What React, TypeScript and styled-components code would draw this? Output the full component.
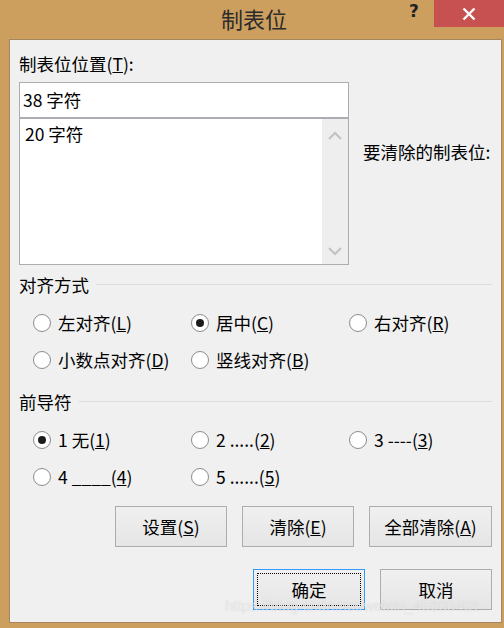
import React, { useState } from 'react'
import styled, { createGlobalStyle } from 'styled-components'

const GlobalStyle = createGlobalStyle`
  html, body {
    margin: 0;
    padding: 0;
  }
  body {
    font-family: "Noto Sans CJK SC", "Noto Sans", sans-serif;
    color: #000;
  }
`

const Window = styled.div`
  position: relative;
  width: 504px;
  height: 628px;
  background: #cc9f5f;
  display: flex;
  flex-direction: column;
  overflow: hidden;
`

const TitleBar = styled.div`
  height: 39px;
  display: flex;
  align-items: flex-start;
`

const Title = styled.div`
  flex: 1;
  text-align: center;
  font-size: 22px;
  line-height: 37px;
  color: #2b2b2b;
  padding-left: 104px;
`

const HelpBtn = styled.div`
  width: 20px;
  margin-right: 10px;
  font-family: "DejaVu Sans", sans-serif;
  font-weight: bold;
  font-size: 17px;
  line-height: 22px;
  color: #222;
  text-align: center;
`

const CloseBtn = styled.div`
  width: 70px;
  height: 27px;
  background: #c75050;
  display: flex;
  align-items: center;
  justify-content: center;
`

const Panel = styled.div`
  margin: 0 2px 5px 9px;
  flex: 1;
  background: #f0f0f0;
  border: 1px solid #a3865f;
  padding: 13px 9px 0 9px;
  font-size: 17.5px;
  display: flex;
  flex-direction: column;
`

const TopRow = styled.div`
  display: flex;
`

const LeftCol = styled.div`
  width: 330px;
  display: flex;
  flex-direction: column;
`

const Label = styled.div`
  line-height: 22px;
  height: 22px;
`

const Input = styled.div`
  margin-top: 7px;
  height: 34px;
  border: 1px solid #abadb3;
  background: #fff;
  padding-left: 3px;
  line-height: 34px;
`

const ListBox = styled.div`
  height: 145px;
  border: 1px solid #abadb3;
  background: #fff;
  display: flex;
`

const ListItems = styled.div`
  flex: 1;
  padding: 2px 0 0 5px;
  line-height: 26px;
`

const ScrollBar = styled.div`
  width: 26px;
  background: #eeeeee;
  display: flex;
  flex-direction: column;
  justify-content: space-between;
  align-items: center;
  padding: 12px 0 8px;
`

const RightLabel = styled.div`
  margin-left: 14px;
  padding-top: 88px;
  line-height: 22px;
  white-space: nowrap;
`

const GroupHeader = styled.div<{ $top: number }>`
  margin-top: ${p => p.$top}px;
  display: flex;
  align-items: center;
  height: 22px;
  line-height: 22px;

  &::after {
    content: '';
    flex: 1;
    height: 1px;
    background: #dcdcdc;
    margin-left: 7px;
    margin-top: -1px;
  }
`

const RadioGrid = styled.div`
  margin-top: 8px;
  padding-left: 14px;
  display: grid;
  grid-template-columns: 158px 158px 158px;
  grid-auto-rows: 37px;
`

const RadioItem = styled.label`
  display: flex;
  align-items: center;
  white-space: pre;
  cursor: default;
`

const Circle = styled.span<{ $on: boolean }>`
  width: 18px;
  height: 18px;
  border-radius: 50%;
  border: 1px solid #8c8c8c;
  background: #fff;
  box-sizing: border-box;
  margin-right: 7px;
  display: flex;
  align-items: center;
  justify-content: center;

  &::after {
    content: '';
    width: 8px;
    height: 8px;
    border-radius: 50%;
    background: #1c1c1c;
    display: ${p => (p.$on ? 'block' : 'none')};
  }
`

const ButtonRow = styled.div<{ $top: number }>`
  margin-top: ${p => p.$top}px;
  display: flex;
  justify-content: flex-end;
  gap: 15px;
`

const Button = styled.div<{ $w?: number; $focus?: boolean }>`
  width: ${p => p.$w || 112}px;
  height: 41px;
  box-sizing: border-box;
  border: 1px solid ${p => (p.$focus ? '#3399ff' : '#adadad')};
  background: linear-gradient(#f0f0f0, #e5e5e5);
  display: flex;
  align-items: center;
  justify-content: center;
  padding: 3px;

  span {
    flex: 1;
    align-self: stretch;
    display: flex;
    align-items: center;
    justify-content: center;
    border: 1px dotted ${p => (p.$focus ? '#000' : 'transparent')};
  }
`

const Watermark = styled.div`
  position: absolute;
  left: 225px;
  top: 597px;
  font-family: "Liberation Sans", sans-serif;
  font-size: 15px;
  color: rgba(255, 255, 255, 0.6);
  text-shadow: 0 0 1px rgba(140, 140, 140, 0.4);
  pointer-events: none;
  white-space: nowrap;
`

const Chevron = ({ up }: { up?: boolean }) => (
  <svg width="14" height="9" viewBox="0 0 14 9">
    <path
      d={up ? 'M1 8 L7 2 L13 8' : 'M1 1 L7 7 L13 1'}
      fill="none"
      stroke="#c2c2c2"
      strokeWidth="2"
    />
  </svg>
)

const align = [
  { id: 'l', text: '左对齐', key: 'L' },
  { id: 'c', text: '居中', key: 'C' },
  { id: 'r', text: '右对齐', key: 'R' },
  { id: 'd', text: '小数点对齐', key: 'D' },
  { id: 'b', text: '竖线对齐', key: 'B' }
]

const leaders = [
  { id: '1', text: '1 无' },
  { id: '2', text: '2 .....' },
  { id: '3', text: '3 ----' },
  { id: '4', text: '4 ____' },
  { id: '5', text: '5 ......' }
]

export default () => {
  const [alignment, setAlignment] = useState('c')
  const [leader, setLeader] = useState('1')

  return (
    <Window>
      <GlobalStyle />
      <TitleBar>
        <Title>制表位</Title>
        <HelpBtn>?</HelpBtn>
        <CloseBtn>
          <svg width="14" height="14" viewBox="0 0 14 14">
            <path d="M1.5 1.5 L12.5 12.5 M12.5 1.5 L1.5 12.5" stroke="#fff" strokeWidth="2.4" />
          </svg>
        </CloseBtn>
      </TitleBar>
      <Panel>
        <TopRow>
          <LeftCol>
            <Label>制表位位置(<u>T</u>):</Label>
            <Input>38 字符</Input>
            <ListBox>
              <ListItems>20 字符</ListItems>
              <ScrollBar>
                <Chevron up />
                <Chevron />
              </ScrollBar>
            </ListBox>
          </LeftCol>
          <RightLabel>要清除的制表位:</RightLabel>
        </TopRow>

        <GroupHeader $top={9}>对齐方式</GroupHeader>
        <RadioGrid>
          {align.map(a => (
            <RadioItem key={a.id} onClick={() => setAlignment(a.id)}>
              <Circle $on={alignment === a.id} />
              {a.text}(<u>{a.key}</u>)
            </RadioItem>
          ))}
        </RadioGrid>

        <GroupHeader $top={13}>前导符</GroupHeader>
        <RadioGrid>
          {leaders.map(l => (
            <RadioItem key={l.id} onClick={() => setLeader(l.id)}>
              <Circle $on={leader === l.id} />
              {l.text}(<u>{l.id}</u>)
            </RadioItem>
          ))}
        </RadioGrid>

        <ButtonRow $top={11}>
          <Button><span>设置(<u>S</u>)</span></Button>
          <Button><span>清除(<u>E</u>)</span></Button>
          <Button $w={123}><span>全部清除(<u>A</u>)</span></Button>
        </ButtonRow>
        <ButtonRow $top={22}>
          <Button $focus><span>确定</span></Button>
          <Button><span>取消</span></Button>
        </ButtonRow>
      </Panel>
      <Watermark>https://blog.csdn.net/weixin_45988401</Watermark>
    </Window>
  )
}
